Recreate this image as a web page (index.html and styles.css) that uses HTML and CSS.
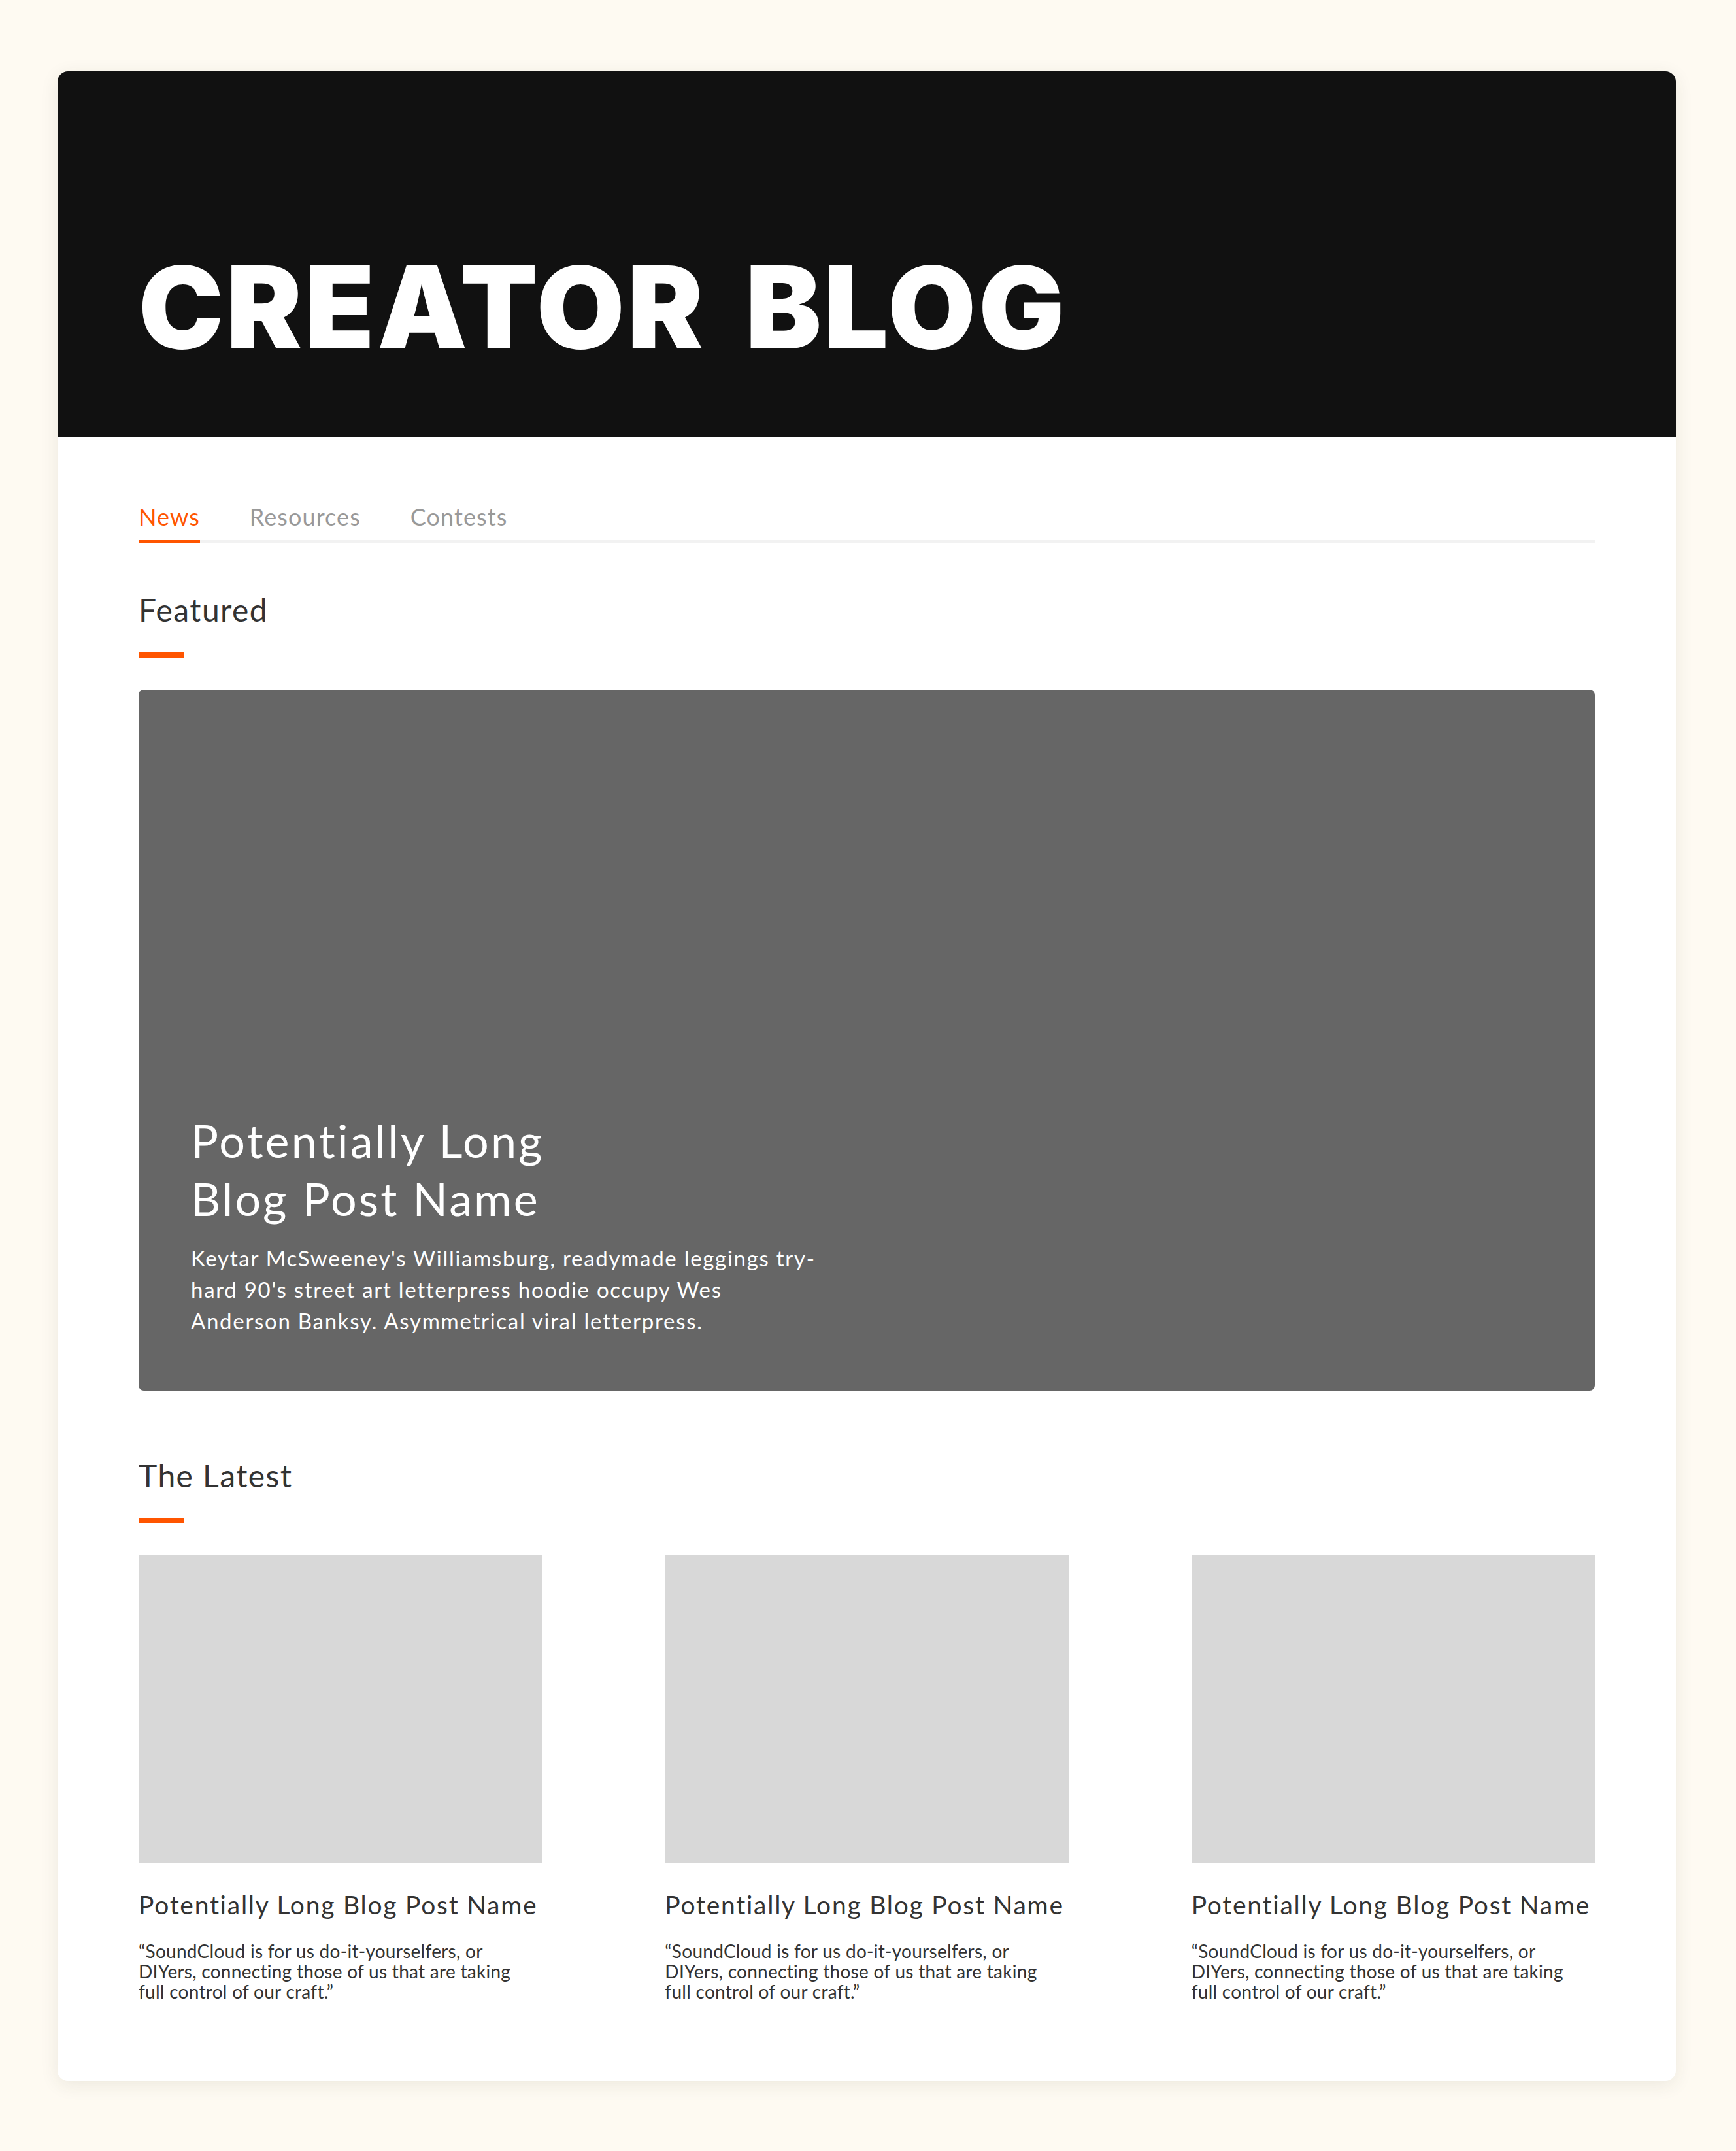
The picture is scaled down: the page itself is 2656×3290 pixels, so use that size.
FILE: index.html
```html
<!DOCTYPE html>
<html lang="en">
<head>
<meta charset="utf-8">
<title>Creator Blog</title>
<link rel="stylesheet" href="styles.css">
</head>
<body>
<main class="page">
  <header class="hero">
    <h1 class="hero-title">CREATOR BLOG</h1>
  </header>
  <div class="content">
    <nav class="tabs">
      <a class="tab tab-active">News</a>
      <a class="tab">Resources</a>
      <a class="tab">Contests</a>
    </nav>

    <section class="section section-featured">
      <h2 class="section-title">Featured</h2>
      <div class="section-rule"></div>
      <article class="featured">
        <h3 class="featured-title">Potentially Long Blog Post Name</h3>
        <p class="featured-desc">Keytar McSweeney's Williamsburg, readymade leggings try-hard 90's street art letterpress hoodie occupy Wes Anderson Banksy. Asymmetrical viral letterpress.</p>
      </article>
    </section>

    <section class="section section-latest">
      <h2 class="section-title">The Latest</h2>
      <div class="section-rule"></div>
      <div class="posts">
        <article class="post">
          <div class="post-image"></div>
          <h3 class="post-title">Potentially Long Blog Post Name</h3>
          <p class="post-desc">“SoundCloud is for us do-it-yourselfers, or DIYers, connecting those of us that are taking full control of our craft.”</p>
        </article>
        <article class="post">
          <div class="post-image"></div>
          <h3 class="post-title">Potentially Long Blog Post Name</h3>
          <p class="post-desc">“SoundCloud is for us do-it-yourselfers, or DIYers, connecting those of us that are taking full control of our craft.”</p>
        </article>
        <article class="post">
          <div class="post-image"></div>
          <h3 class="post-title">Potentially Long Blog Post Name</h3>
          <p class="post-desc">“SoundCloud is for us do-it-yourselfers, or DIYers, connecting those of us that are taking full control of our craft.”</p>
        </article>
      </div>
    </section>
  </div>
</main>
</body>
</html>
```

FILE: styles.css
```css
html, body {
  margin: 0;
  padding: 0;
}
body {
  background: #fefaf2;
  font-family: Lato, "Liberation Sans", sans-serif;
  font-variant-ligatures: none;
  color: #333;
}
.page {
  width: 2476px;
  margin: 109px 0 107px 88px;
  background: #fff;
  border-radius: 16px;
  overflow: hidden;
  box-shadow: 0 6px 28px rgba(60, 50, 30, 0.09);
}
.hero {
  box-sizing: border-box;
  height: 560px;
  background: #111;
  padding: 274px 124px 0;
}
.hero-title {
  margin: 0;
  font-family: Inter, "Liberation Sans", sans-serif;
  font-weight: 900;
  font-size: 174px;
  line-height: 174px;
  letter-spacing: 4px;
  word-spacing: 22px;
  color: #fff;
}
.content {
  padding: 99px 124px 121px;
}
.tabs {
  display: flex;
  gap: 76px;
  border-bottom: 4px solid #f2f2f2;
}
.tab {
  font-size: 36px;
  line-height: 44px;
  letter-spacing: 0.03em;
  padding: 0 0 14px;
  margin-bottom: -4px;
  border-bottom: 4px solid transparent;
  color: #999;
}
.tab-active {
  color: #ff5500;
  border-bottom-color: #ff5500;
}
.section-featured {
  margin-top: 75px;
}
.section-latest {
  margin-top: 102px;
}
.section-title {
  margin: 0;
  font-size: 48px;
  line-height: 56px;
  font-weight: 400;
  letter-spacing: 0.03em;
  color: #333;
}
.section-rule {
  width: 70px;
  height: 8px;
  background: #ff5500;
  margin: 37px 0 49px;
}
.featured {
  box-sizing: border-box;
  height: 1072px;
  background: #666;
  border-radius: 8px;
  padding: 0 80px 83px;
  display: flex;
  flex-direction: column;
  justify-content: flex-end;
  color: #fff;
}
.featured-title {
  margin: 0;
  max-width: 640px;
  font-size: 70px;
  line-height: 89px;
  font-weight: 400;
  letter-spacing: 0.045em;
}
.featured-desc {
  margin: 22px 0 0;
  max-width: 964px;
  font-size: 33px;
  line-height: 48px;
  letter-spacing: 0.052em;
}
.posts {
  display: grid;
  grid-template-columns: repeat(3, 1fr);
  column-gap: 188px;
}
.post-image {
  height: 470px;
  background: #d8d8d8;
}
.post-title {
  margin: 40px 0 0;
  font-size: 39px;
  line-height: 48px;
  font-weight: 400;
  letter-spacing: 0.045em;
  color: #333;
}
.post-desc {
  margin: 32px 0 0;
  max-width: 590px;
  font-size: 28px;
  line-height: 31px;
  letter-spacing: 0.01em;
  color: #333;
}
```
